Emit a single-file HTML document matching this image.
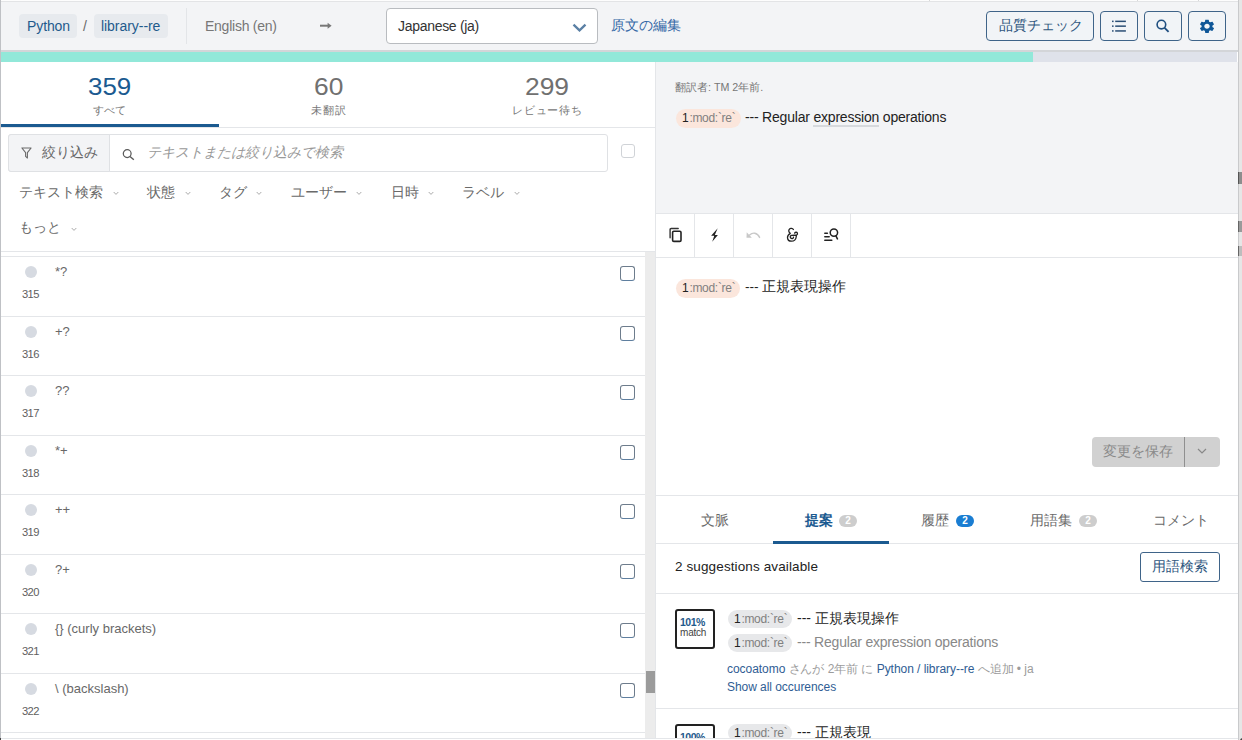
<!DOCTYPE html>
<html><head><meta charset="utf-8">
<style>
*{box-sizing:border-box;margin:0;padding:0}
html,body{width:1242px;height:740px;overflow:hidden;background:#fff;font-family:"Liberation Sans",sans-serif;color:#333}
.a{position:absolute}
.t{position:absolute;white-space:nowrap;line-height:1}
.ln{position:absolute;background:#e4e6e9}
.pill{position:absolute;height:24px;top:14px;background:#e7eaee;border-radius:4px}
.btn{position:absolute;top:11px;height:30px;border:1px solid #3f6489;border-radius:4px;background:#f1f4f7}
.dot{position:absolute;left:25px;width:12px;height:12px;border-radius:50%;background:#d6dae1}
.src{left:55px;font-size:13px;color:#686868}
.num{left:22px;font-size:11.2px;color:#606060;letter-spacing:-0.6px}
.cb{position:absolute;left:620px;width:15px;height:15px;border:1.5px solid #6d7c8c;border-bottom-color:#5f7f9f;border-radius:3px;background:#fff}
.chip{position:absolute;height:19px;border-radius:10px}
.ct{font-size:12px;color:#808080;letter-spacing:-0.3px}
.ct b{margin-right:1px}
.ct b{font-weight:normal;color:#222}
.dd{font-size:13.5px;color:#6a6a6a}
.badge{position:absolute;width:18px;height:12px;border-radius:6px;color:#fff;font-size:10px;line-height:12px;text-align:center;font-weight:bold}
.tab{font-size:14px;color:#6a6a6a}
.mt{font-size:12px;color:#9c9c9c;letter-spacing:-0.05px}
.lk{color:#2f5d94}
</style></head><body>
<!-- header -->
<div class="a" style="left:0;top:0;width:1242px;height:50px;background:#f3f4f6"></div>
<div class="a" style="left:0;top:0;width:1242px;height:1px;background:#fdfdfd"></div>
<div class="a" style="left:0;top:1px;width:1242px;height:1px;background:#e3e4e6"></div>
<div class="a" style="left:929px;top:0;width:1px;height:1px;background:#d8d8d8"></div>
<div class="a" style="left:1137px;top:0;width:1px;height:1px;background:#d8d8d8"></div>
<div class="a" style="left:1198px;top:0;width:1px;height:1px;background:#d8d8d8"></div>
<div class="a" style="left:0;top:0;width:1px;height:740px;background:#bfc1c5"></div>

<div class="pill" style="left:19px;width:58px"></div>
<div class="t" style="left:27px;top:19px;font-size:14px;color:#1f5a8c;letter-spacing:-0.1px">Python</div>
<div class="t" style="left:83px;top:19px;font-size:14px;color:#6a6a6a">/</div>
<div class="pill" style="left:94px;width:74px"></div>
<div class="t" style="left:101px;top:19px;font-size:14px;color:#1f5a8c;letter-spacing:-0.05px">library--re</div>
<div class="a" style="left:186px;top:8px;width:1px;height:36px;background:#e3e5e8"></div>
<div class="t" style="left:205px;top:19px;font-size:14px;color:#777;letter-spacing:-0.25px">English (en)</div>
<svg class="a" style="left:319px;top:21px" width="14" height="10" viewBox="0 0 14 10"><path d="M1 4.7 H9.5" stroke="#777" stroke-width="2"/><path d="M8.6 1.8 L12.6 4.7 L8.6 7.8 Z" fill="#777"/></svg>
<div class="a" style="left:386px;top:8px;width:212px;height:36px;background:#fff;border:1px solid #b9bcc0;border-radius:4px"></div>
<div class="t" style="left:398px;top:19px;font-size:14px;color:#333;letter-spacing:-0.3px">Japanese (ja)</div>
<svg class="a" style="left:572px;top:22px" width="15" height="11" viewBox="0 0 15 11"><path d="M1.5 2.6 L7.5 8.4 L13.5 2.6" fill="none" stroke="#5b80a5" stroke-width="2.3"/></svg>
<div class="t" style="left:611px;top:18px;font-size:14px;color:#3568a6">原文の編集</div>

<div class="btn" style="left:986px;width:108px"></div>
<div class="t" style="left:999px;top:19px;font-size:13.8px;color:#2f567e;letter-spacing:0.1px">品質チェック</div>
<div class="btn" style="left:1100px;width:38px"></div>
<div class="btn" style="left:1144px;width:38px"></div>
<div class="btn" style="left:1188px;width:38px"></div>
<svg class="a" style="left:1111px;top:18px" width="16" height="16" viewBox="0 0 16 16"><g fill="#2b4f75"><rect x="1" y="2.6" width="1.6" height="1.5"/><rect x="1" y="7.4" width="1.6" height="1.5"/><rect x="1" y="12.2" width="1.6" height="1.5"/><rect x="4.2" y="2.6" width="10.7" height="1.5"/><rect x="4.2" y="7.4" width="10.7" height="1.5"/><rect x="4.2" y="12.2" width="10.7" height="1.5"/></g></svg>
<svg class="a" style="left:1155px;top:18px" width="16" height="16" viewBox="0 0 16 16"><circle cx="6.4" cy="6.6" r="4.3" fill="none" stroke="#1f4f80" stroke-width="1.6"/><path d="M9.6 9.8 L13.6 13.8" stroke="#1f4f80" stroke-width="1.8"/></svg>
<svg class="a" style="left:1198px;top:17.5px" width="18" height="16.7" viewBox="0 0 24 24" preserveAspectRatio="none"><path fill="#0f5798" d="M19.14 12.94c.04-.3.06-.61.06-.94 0-.32-.02-.64-.07-.94l2.03-1.58a.49.49 0 0 0 .12-.61l-1.92-3.32a.488.488 0 0 0-.59-.22l-2.39.96c-.5-.38-1.030-.7-1.62-.94l-.36-2.54a.484.484 0 0 0-.48-.41h-3.84c-.24 0-.43.17-.47.41l-.36 2.54c-.59.24-1.13.57-1.62.94l-2.39-.96c-.22-.08-.47 0-.59.22L2.74 8.87c-.12.21-.08.47.12.61l2.03 1.58c-.05.3-.09.63-.09.94s.02.64.07.94l-2.03 1.58a.49.49 0 0 0-.12.61l1.92 3.32c.12.22.37.29.59.22l2.39-.96c.5.38 1.03.7 1.62.94l.36 2.54c.05.24.24.41.48.41h3.84c.24 0 .44-.17.47-.41l.36-2.54c.59-.24 1.13-.56 1.62-.94l2.39.96c.22.08.47 0 .59-.22l1.92-3.32c.12-.22.07-.47-.12-.61l-2.01-1.58zM12 15.6c-1.98 0-3.6-1.62-3.6-3.6s1.62-3.6 3.6-3.6 3.6 1.62 3.6 3.6-1.62 3.6-3.6 3.6z"/></svg>

<!-- progress -->
<div class="a" style="left:1px;top:50px;width:1237px;height:2px;background:#d3d5d8"></div>
<div class="a" style="left:1px;top:52px;width:1236px;height:10px;background:#dfe2ea"></div>
<div class="a" style="left:1px;top:52px;width:1032px;height:10px;background:#92e8d9"></div>

<!-- left panel: tabs -->
<div class="t" style="left:88px;top:75px;font-size:24px;color:#1b5a90;transform:scaleX(1.08);transform-origin:0 0">359</div>
<div class="t" style="left:93px;top:105px;font-size:11.3px;color:#777">すべて</div>
<div class="t" style="left:314px;top:75px;font-size:24px;color:#707070;transform:scaleX(1.1);transform-origin:0 0">60</div>
<div class="t" style="left:311px;top:105px;font-size:11.3px;color:#777;letter-spacing:1px">未翻訳</div>
<div class="t" style="left:525px;top:75px;font-size:24px;color:#707070;transform:scaleX(1.1);transform-origin:0 0">299</div>
<div class="t" style="left:512px;top:105px;font-size:11.3px;color:#777;letter-spacing:0.8px">レビュー待ち</div>
<div class="a" style="left:1px;top:124px;width:218px;height:3px;background:#1b5a90"></div>
<div class="ln" style="left:1px;top:127px;width:654px;height:1px"></div>

<!-- filter group -->
<div class="a" style="left:8px;top:134px;width:600px;height:38px;border:1px solid #dfe1e4;border-radius:3px;background:#fff"></div>
<div class="a" style="left:8px;top:134px;width:102px;height:38px;border:1px solid #dfe1e4;border-radius:3px 0 0 3px;background:#f3f4f6"></div>
<svg class="a" style="left:21px;top:147px" width="11" height="12" viewBox="0 0 11 12"><path d="M0.9 1 H10.1 L6.4 5.6 V11 L4.6 9.4 V5.6 Z" fill="none" stroke="#6a6a6a" stroke-width="1.1" stroke-linejoin="round"/></svg>
<div class="t" style="left:42px;top:145px;font-size:14px;color:#666">絞り込み</div>
<svg class="a" style="left:122px;top:148px" width="13" height="13" viewBox="0 0 13 13"><circle cx="5.2" cy="5.6" r="3.9" fill="none" stroke="#5a5a5a" stroke-width="1.25"/><path d="M8 8.4 L11.8 11.8" stroke="#5a5a5a" stroke-width="1.4"/></svg>
<div class="t" style="left:147px;top:145px;font-size:14px;color:#999;font-style:italic">テキストまたは絞り込みで検索</div>
<div class="a" style="left:621px;top:144px;width:14px;height:14px;border:1px solid #d0d3d7;border-radius:3px;background:#fff"></div>

<!--DDS--><div class="t dd" style="left:19px;top:186px">テキスト検索</div>
<svg class="a" style="left:113px;top:191px" width="6" height="5" viewBox="0 0 6 5"><path d="M0.7 1 L3 3.4 L5.3 1" fill="none" stroke="#aaa" stroke-width="1"/></svg>
<div class="t dd" style="left:147px;top:186px">状態</div>
<svg class="a" style="left:185px;top:191px" width="6" height="5" viewBox="0 0 6 5"><path d="M0.7 1 L3 3.4 L5.3 1" fill="none" stroke="#aaa" stroke-width="1"/></svg>
<div class="t dd" style="left:219px;top:186px">タグ</div>
<svg class="a" style="left:256px;top:191px" width="6" height="5" viewBox="0 0 6 5"><path d="M0.7 1 L3 3.4 L5.3 1" fill="none" stroke="#aaa" stroke-width="1"/></svg>
<div class="t dd" style="left:291px;top:186px">ユーザー</div>
<svg class="a" style="left:356px;top:191px" width="6" height="5" viewBox="0 0 6 5"><path d="M0.7 1 L3 3.4 L5.3 1" fill="none" stroke="#aaa" stroke-width="1"/></svg>
<div class="t dd" style="left:391px;top:186px">日時</div>
<svg class="a" style="left:428px;top:191px" width="6" height="5" viewBox="0 0 6 5"><path d="M0.7 1 L3 3.4 L5.3 1" fill="none" stroke="#aaa" stroke-width="1"/></svg>
<div class="t dd" style="left:462px;top:186px">ラベル</div>
<svg class="a" style="left:514px;top:191px" width="6" height="5" viewBox="0 0 6 5"><path d="M0.7 1 L3 3.4 L5.3 1" fill="none" stroke="#aaa" stroke-width="1"/></svg>
<div class="t dd" style="left:19px;top:221px">もっと</div>
<svg class="a" style="left:71px;top:227px" width="6" height="5" viewBox="0 0 6 5"><path d="M0.7 1 L3 3.4 L5.3 1" fill="none" stroke="#aaa" stroke-width="1"/></svg><!--/DDS-->

<div class="ln" style="left:1px;top:251px;width:654px;height:1px"></div>

<!-- scrollbar -->
<div class="a" style="left:645px;top:252px;width:10px;height:488px;background:#ececec"></div>
<div class="a" style="left:646px;top:671px;width:9px;height:22px;background:#9b9b9b"></div>

<!--ROWS--><div class="ln" style="left:1px;top:256px;width:644px;height:1px"></div>
<div class="dot" style="top:266px"></div>
<div class="t src" style="top:265px">*?</div>
<div class="t num" style="top:289px">315</div>
<div class="cb" style="top:266px"></div>
<div class="ln" style="left:1px;top:316px;width:644px;height:1px"></div>
<div class="dot" style="top:326px"></div>
<div class="t src" style="top:325px">+?</div>
<div class="t num" style="top:349px">316</div>
<div class="cb" style="top:326px"></div>
<div class="ln" style="left:1px;top:375px;width:644px;height:1px"></div>
<div class="dot" style="top:385px"></div>
<div class="t src" style="top:384px">??</div>
<div class="t num" style="top:408px">317</div>
<div class="cb" style="top:385px"></div>
<div class="ln" style="left:1px;top:435px;width:644px;height:1px"></div>
<div class="dot" style="top:445px"></div>
<div class="t src" style="top:444px">*+</div>
<div class="t num" style="top:468px">318</div>
<div class="cb" style="top:445px"></div>
<div class="ln" style="left:1px;top:494px;width:644px;height:1px"></div>
<div class="dot" style="top:504px"></div>
<div class="t src" style="top:503px">++</div>
<div class="t num" style="top:527px">319</div>
<div class="cb" style="top:504px"></div>
<div class="ln" style="left:1px;top:554px;width:644px;height:1px"></div>
<div class="dot" style="top:564px"></div>
<div class="t src" style="top:563px">?+</div>
<div class="t num" style="top:587px">320</div>
<div class="cb" style="top:564px"></div>
<div class="ln" style="left:1px;top:613px;width:644px;height:1px"></div>
<div class="dot" style="top:623px"></div>
<div class="t src" style="top:622px">{} (curly brackets)</div>
<div class="t num" style="top:646px">321</div>
<div class="cb" style="top:623px"></div>
<div class="ln" style="left:1px;top:673px;width:644px;height:1px"></div>
<div class="dot" style="top:683px"></div>
<div class="t src" style="top:682px">\ (backslash)</div>
<div class="t num" style="top:706px">322</div>
<div class="cb" style="top:683px"></div>
<div class="ln" style="left:1px;top:732px;width:644px;height:1px"></div><!--/ROWS-->

<!-- right panel -->
<div class="a" style="left:656px;top:62px;width:582px;height:151px;background:#f3f4f6"></div>
<div class="a" style="left:655px;top:62px;width:1px;height:678px;background:#e4e6e9"></div>
<div class="a" style="left:1239px;top:0;width:3px;height:740px;background:#e6e6e6"></div>
<div class="a" style="left:1238px;top:0;width:1px;height:740px;background:#c9cacc"></div>
<div class="a" style="left:1238px;top:172px;width:4px;height:12px;background:#8d8d8d;border-left:1px solid #555"></div>
<div class="a" style="left:1238px;top:221px;width:4px;height:11px;background:#9a9a9a;border-left:1px solid #666"></div>
<div class="a" style="left:1238px;top:246px;width:4px;height:10px;background:#bdbdbd;border-left:1px solid #666"></div>

<div class="t" style="left:675px;top:82px;font-size:10.7px;color:#777">翻訳者: TM 2年前.</div>
<div class="chip" style="left:676px;top:109px;width:65px;background:#fbe6dc"></div>
<div class="t ct" style="left:682px;top:112px"><b>1</b>:mod:`re`</div>
<div class="t" style="left:745px;top:110px;font-size:14px;color:#222;letter-spacing:-0.2px">--- Regular <span style="border-bottom:2px solid #d6d9dd;padding-bottom:0">expression</span> operations</div>
<div class="ln" style="left:656px;top:213px;width:582px;height:1px"></div>
<div class="ln" style="left:656px;top:257px;width:582px;height:1px"></div>
<div class="ln" style="left:694px;top:214px;width:1px;height:43px"></div>
<div class="ln" style="left:733px;top:214px;width:1px;height:43px"></div>
<div class="ln" style="left:772px;top:214px;width:1px;height:43px"></div>
<div class="ln" style="left:811px;top:214px;width:1px;height:43px"></div>
<div class="ln" style="left:850px;top:214px;width:1px;height:43px"></div>

<svg class="a" style="left:667px;top:226px" width="17" height="17" viewBox="0 0 17 17"><path d="M3.1 11.8 V3.6 Q3.1 2.5 4.2 2.5 H11.2" fill="none" stroke="#333" stroke-width="1.4" stroke-linecap="round"/><rect x="5.6" y="5.2" width="8.4" height="10.2" rx="1.2" fill="none" stroke="#222" stroke-width="1.6"/></svg>
<svg class="a" style="left:708px;top:227px" width="12" height="16" viewBox="0 0 12 16"><path d="M9.7 1.3 L3.1 8.7 H6.3 L4.2 14.8 L9.9 8 H6.8 Z" fill="#222"/></svg>
<svg class="a" style="left:745px;top:229px" width="17" height="12" viewBox="0 0 17 12"><path d="M4.6 6 C7.6 3.2 12.2 3.2 14.6 8.4" fill="none" stroke="#c8c8c8" stroke-width="1.4" stroke-linecap="round"/><path d="M1.7 3.3 L1.5 8.7 L6.8 8.7 Z" fill="#c8c8c8"/></svg>
<svg class="a" style="left:785px;top:226px" width="14" height="17" viewBox="0 0 14 17"><path d="M8.4 3.5 C7.8 2.3 6.6 2.2 5.8 2.4 C4.3 2.8 3.4 4.2 3.9 5.5 C4.2 6.4 4.9 7 5.3 7.4 C3.6 8.4 2.4 9.8 2.5 11.6 C2.6 13.8 4.4 15.2 6.4 15.2 C8.9 15.2 10.9 13.4 11.2 11 C11.3 10.2 11.3 9.6 11.5 9.2 C12.3 8.6 12.8 7.6 12.3 6.8 C11.8 6 10.4 6 9.6 7.1 M11.5 9.2 C10 9.3 7.8 9.2 6.6 9.4 C5.6 9.6 5.1 10.5 5.3 11.3 C5.6 12.3 6.6 12.7 7.5 12.5 C8.3 12.3 8.7 11.6 8.4 11.1" fill="none" stroke="#222" stroke-width="1.3" stroke-linecap="round" stroke-linejoin="round"/></svg>
<svg class="a" style="left:822px;top:226px" width="18" height="17" viewBox="0 0 18 17"><path d="M2.8 7.3 H5.4 M2.8 10.8 H7.2 M2.8 14.3 H9.8" stroke="#222" stroke-width="1.5" stroke-linecap="round"/><circle cx="11.9" cy="6.6" r="3.7" fill="none" stroke="#222" stroke-width="1.5"/><path d="M14 10 L15.4 12.9" stroke="#222" stroke-width="1.6" stroke-linecap="round"/></svg>

<div class="chip" style="left:676px;top:279px;width:64px;background:#fbe6dc"></div>
<div class="t ct" style="left:682px;top:282px"><b>1</b>:mod:`re`</div>
<div class="t" style="left:745px;top:280px;font-size:13.7px;color:#222">--- 正規表現操作</div>

<div class="a" style="left:1092px;top:437px;width:128px;height:30px;background:#d1d1d1;border-radius:4px"></div>
<div class="a" style="left:1184px;top:437px;width:1px;height:30px;background:#8f8f8f"></div>
<div class="t" style="left:1103px;top:444px;font-size:14px;color:#8a8a8a">変更を保存</div>
<svg class="a" style="left:1197px;top:448px" width="10" height="7" viewBox="0 0 10 7"><path d="M1 1 L5 5 L9 1" fill="none" stroke="#888" stroke-width="1.2"/></svg>

<div class="ln" style="left:656px;top:495px;width:582px;height:1px"></div>
<div class="ln" style="left:656px;top:543px;width:582px;height:1px"></div>
<div class="a" style="left:773px;top:541px;width:116px;height:3px;background:#1b5a90"></div>
<div class="t tab" style="left:701px;top:513px">文脈</div>
<div class="t tab" style="left:805px;top:513px;color:#1b5a90;font-weight:bold">提案</div>
<div class="badge" style="left:839px;top:514.5px;background:#cdcdcd">2</div>
<div class="t tab" style="left:921px;top:513px">履歴</div>
<div class="badge" style="left:956px;top:514.5px;background:#1a7dd2">2</div>
<div class="t tab" style="left:1030px;top:513px">用語集</div>
<div class="badge" style="left:1079px;top:514.5px;background:#cdcdcd">2</div>
<div class="t tab" style="left:1153px;top:513px">コメント</div>

<div class="t" style="left:675px;top:560px;font-size:13.5px;color:#222;letter-spacing:0.12px">2 suggestions available</div>
<div class="a" style="left:1140px;top:552px;width:80px;height:30px;border:1px solid #3f6489;border-radius:3px;background:#fff"></div>
<div class="t" style="left:1152px;top:559px;font-size:14px;color:#2f567e">用語検索</div>
<div class="ln" style="left:656px;top:593px;width:582px;height:1px"></div>

<div class="a" style="left:675px;top:609px;width:40px;height:40px;border:2px solid #222;border-radius:3px"></div>
<div class="t" style="left:680px;top:617px;font-size:10.5px;color:#1f5a8c;letter-spacing:-0.5px;font-weight:bold">101%</div>
<div class="t" style="left:680px;top:628px;font-size:10px;color:#444;letter-spacing:-0.2px">match</div>
<div class="chip" style="left:728px;top:610px;width:64px;height:18px;background:#e7e8ea"></div>
<div class="t ct" style="left:734px;top:613px"><b>1</b>:mod:`re`</div>
<div class="t" style="left:797px;top:611px;font-size:14px;color:#222">--- 正規表現操作</div>
<div class="chip" style="left:728px;top:634px;width:64px;height:18px;background:#e7e8ea"></div>
<div class="t ct" style="left:734px;top:637px"><b>1</b>:mod:`re`</div>
<div class="t" style="left:797px;top:635px;font-size:14px;color:#888;letter-spacing:-0.2px">--- Regular expression operations</div>
<div class="t mt" style="left:727px;top:663px"><span class="lk">cocoatomo</span> さんが 2年前 に <span class="lk">Python / library--re</span> へ追加 • ja</div>
<div class="t mt lk" style="left:727px;top:681px">Show all occurences</div>
<div class="ln" style="left:656px;top:708px;width:582px;height:1px"></div>
<div class="a" style="left:675px;top:724px;width:40px;height:40px;border:2px solid #222;border-radius:3px"></div>
<div class="t" style="left:680px;top:732px;font-size:10.5px;color:#1f5a8c;letter-spacing:-0.5px;font-weight:bold">100%</div>
<div class="chip" style="left:728px;top:724px;width:64px;height:18px;background:#e7e8ea"></div>
<div class="t ct" style="left:734px;top:727px"><b>1</b>:mod:`re`</div>
<div class="t" style="left:797px;top:725px;font-size:14px;color:#222">--- 正規表現</div>
<div class="a" style="left:1px;top:738px;width:1237px;height:2px;background:#fff"></div>
<div class="ln" style="left:1px;top:738px;width:1237px;height:1px"></div>
<div class="a" style="left:1240px;top:738px;width:3px;height:3px;background:#444;border-top-left-radius:3px"></div>
<div class="a" style="left:0;top:738px;width:1px;height:2px;background:#444"></div>
</body></html>
